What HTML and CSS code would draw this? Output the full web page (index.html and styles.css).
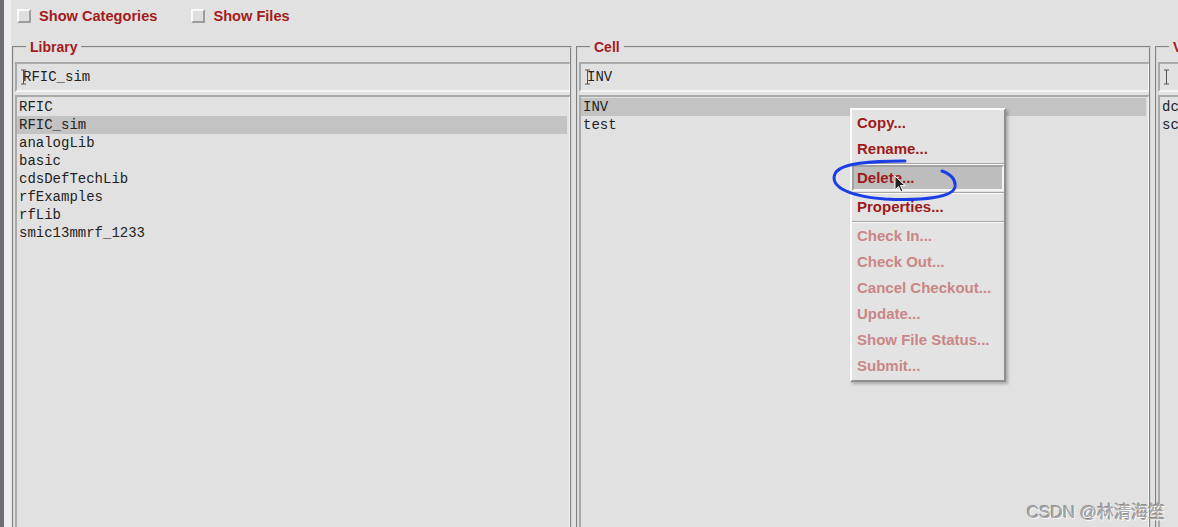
FILE: index.html
```html
<!DOCTYPE html>
<html lang="en">
<head>
    <meta charset="UTF-8">
    <title>Library Manager</title>
    <link rel="stylesheet" href="styles.css">
</head>
<body>
    <div class="app">
        <div class="options">
            <label class="check"><span class="box"></span>Show Categories</label>
            <label class="check"><span class="box"></span>Show Files</label>
        </div>

        <div class="panes">
            <fieldset class="pane">
                <legend>Library</legend>
                <div class="field"><svg class="caret" width="5" height="16" viewBox="0 0 5 16"><path d="M0 1h5M2.5 1v14M0 15h5" stroke="#555" stroke-width="1" fill="none"/></svg>RFIC_sim</div>
                <ul class="list">
                    <li>RFIC</li>
                    <li class="selected">RFIC_sim</li>
                    <li>analogLib</li>
                    <li>basic</li>
                    <li>cdsDefTechLib</li>
                    <li>rfExamples</li>
                    <li>rfLib</li>
                    <li>smic13mmrf_1233</li>
                </ul>
            </fieldset>

            <fieldset class="pane">
                <legend>Cell</legend>
                <div class="field"><svg class="caret" width="5" height="16" viewBox="0 0 5 16"><path d="M0 1h5M2.5 1v14M0 15h5" stroke="#555" stroke-width="1" fill="none"/></svg>INV</div>
                <ul class="list">
                    <li class="selected">INV</li>
                    <li>test</li>
                </ul>
            </fieldset>

            <fieldset class="pane">
                <legend>View</legend>
                <div class="field"><svg class="caret" width="5" height="16" viewBox="0 0 5 16"><path d="M0 1h5M2.5 1v14M0 15h5" stroke="#555" stroke-width="1" fill="none"/></svg></div>
                <ul class="list">
                    <li>dc</li>
                    <li>schematic</li>
                </ul>
            </fieldset>
        </div>
    </div>

    <div class="menu">
        <div class="item">Copy...</div>
        <div class="item">Rename...</div>
        <div class="sep"></div>
        <div class="item active">Delete...</div>
        <div class="sep"></div>
        <div class="item">Properties...</div>
        <div class="sep"></div>
        <div class="item disabled">Check In...</div>
        <div class="item disabled">Check Out...</div>
        <div class="item disabled">Cancel Checkout...</div>
        <div class="item disabled">Update...</div>
        <div class="item disabled">Show File Status...</div>
        <div class="item disabled">Submit...</div>
    </div>

    <svg class="circle" width="130" height="46" viewBox="828 158 130 46">
        <path d="M905 161 C870 161 843 163 836 172 C828 185 845 196 885 199 C925 201 953 197 955 187 C956 179 950 174 942 171" fill="none" stroke="#1a3ee6" stroke-width="3" stroke-linecap="round"/>
    </svg>

    <svg class="pointer" width="14" height="20" viewBox="0 0 14 20">
        <polygon points="1,1 1,15 4.5,11.5 7,17 9,16 6.5,10.5 11,10.5" fill="#222" stroke="#fff" stroke-width="1"/>
    </svg>

    <div class="watermark">CSDN @林清海笙</div>
</body>
</html>
```

FILE: styles.css
```css
body {
    margin: 0;
    height: 527px;
    overflow: hidden;
    position: relative;
    background-color: #e1e1e1;
    font-family: "Liberation Sans", Arial, sans-serif;
}

.app {
    height: 527px;
    border-left: 4px solid #6e6e74;
    background: linear-gradient(to right, #efeeee 7px, #e1e1e1 7px);
}

.options {
    height: 39px;
    display: flex;
    align-items: flex-start;
    padding: 9px 0 0 13px;
    box-sizing: border-box;
    gap: 34px;
}

.check {
    display: flex;
    align-items: center;
    gap: 8px;
    color: #a31b1b;
    font-weight: bold;
    font-size: 14.6px;
    line-height: 14px;
}

.box {
    width: 10px;
    height: 10px;
    border: 2px solid;
    border-color: #fafafa #9d9d9d #9d9d9d #fafafa;
    background: #dedede;
}

.panes {
    display: grid;
    grid-template-columns: 560px 575px 320px;
    column-gap: 4px;
    margin-left: 8px;
}

.pane {
    margin: 0;
    padding: 0;
    min-width: 0;
    height: 500px;
    border: 2px groove #d6d6d6;
    overflow: hidden;
}

.pane legend {
    margin-left: 12px;
    padding: 0 4px;
    color: #a31b1b;
    font-weight: bold;
    font-size: 14px;
    line-height: 16px;
}

.field {
    margin: 7px -1px 0 1px;
    height: 26px;
    border: 2px solid;
    border-color: #a9a9a9 #f6f6f6 #f6f6f6 #a9a9a9;
    display: flex;
    align-items: center;
    padding-left: 4px;
    font-family: "Liberation Mono", "Courier New", monospace;
    font-size: 14px;
    color: #222;
    white-space: nowrap;
}

.caret {
    margin-right: -3px;
}

.list {
    list-style: none;
    margin: 3px -1px 0 1px;
    padding: 1px 2px 0 0;
    height: 440px;
    border: 2px solid;
    border-color: #a9a9a9 #f6f6f6 #f6f6f6 #a9a9a9;
    font-family: "Liberation Mono", "Courier New", monospace;
    font-size: 14px;
    color: #222;
}

.list li {
    height: 18px;
    line-height: 18px;
    padding-left: 2px;
    white-space: nowrap;
}

.list .selected {
    background-color: #c3c3c3;
}

.menu {
    position: absolute;
    left: 850px;
    top: 108px;
    width: 152px;
    padding-bottom: 1px;
    background-color: #e3e3e3;
    border: 2px solid;
    border-color: #fbfbfb #8e8e8e #8e8e8e #fbfbfb;
    box-shadow: 2px 2px 3px rgba(0, 0, 0, 0.25);
}

.item {
    height: 26px;
    line-height: 26px;
    padding-left: 5px;
    color: #9e1a1a;
    font-weight: bold;
    font-size: 15px;
    white-space: nowrap;
}

.item.active {
    height: 22px;
    line-height: 22px;
    padding-left: 3px;
    background-color: #bdbdbd;
    border: 2px solid;
    border-color: #a2a2a2 #f4f4f4 #f4f4f4 #a2a2a2;
}

.item.disabled {
    color: #c98686;
}

.sep {
    margin-top: 1px;
    border-top: 1px solid #a5a5a5;
    border-bottom: 1px solid #fafafa;
}

.circle {
    position: absolute;
    left: 828px;
    top: 158px;
}

.pointer {
    position: absolute;
    left: 894px;
    top: 175px;
}

.watermark {
    position: absolute;
    left: 1027px;
    top: 498px;
    font-family: "Liberation Sans", "Noto Sans CJK SC", sans-serif;
    font-size: 17px;
    color: #a8a8a8;
    text-shadow: 1px 1px 0 #fafafa, -1px -1px 0 #8c8c8c;
}
```
